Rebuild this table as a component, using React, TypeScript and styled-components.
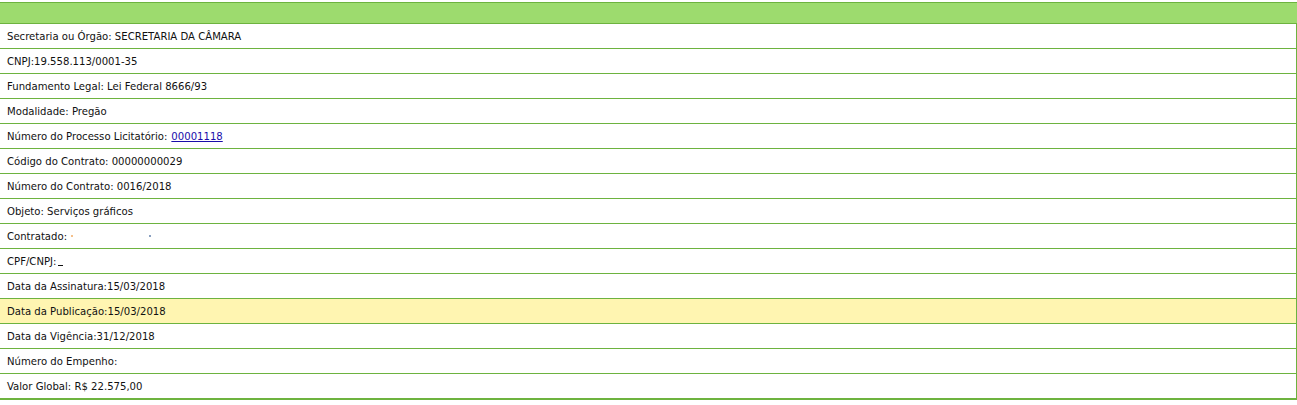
import styled, { createGlobalStyle } from "styled-components";

const GlobalStyle = createGlobalStyle`
  html, body {
    margin: 0;
    padding: 0;
    background: #ffffff;
  }
`;

const Wrapper = styled.div`
  padding-top: 2px;
  width: 1297px;
`;

const Sheet = styled.div`
  width: 1296px;
  border-right: 1px solid #6db33f;
  border-bottom: 2px solid #6db33f;
  font-family: "DejaVu Sans", Verdana, sans-serif;
  font-size: 10.1px;
  color: #111111;
`;

const Header = styled.div`
  height: 20px;
  background-color: #9ddb6e;
  border-top: 1px solid #6db33f;
  border-bottom: 1px solid #6db33f;
  margin-right: -1px;
`;

const Row = styled.div<{ $highlight?: boolean; $last?: boolean }>`
  height: 24px;
  display: flex;
  align-items: center;
  padding-left: 7px;
  background-color: ${(p) => (p.$highlight ? "#fff5b1" : "#ffffff")};
  border-bottom: ${(p) => (p.$last ? "none" : "1px solid #6db33f")};
  white-space: pre;
`;

const Link = styled.a`
  color: #1a0dab;
  text-decoration: underline;
  margin-left: 4px;
`;

const Blot = styled.span<{ $color: string; $left: number }>`
  display: inline-block;
  width: 2px;
  height: 2px;
  background: ${(p) => p.$color};
  margin-left: ${(p) => p.$left}px;
  align-self: center;
`;

const Underscore = styled.span`
  display: inline-block;
  width: 5px;
  height: 1px;
  background: #111;
  margin-left: 2px;
  margin-top: 8px;
`;

const rows: { label: string }[] = [
  { label: "Secretaria ou Órgão: SECRETARIA DA CÂMARA" },
  { label: "CNPJ:19.558.113/0001-35" },
  { label: "Fundamento Legal: Lei Federal 8666/93" },
  { label: "Modalidade: Pregão" },
];

const rowsAfter: { label: string; highlight?: boolean }[] = [
  { label: "Data da Assinatura:15/03/2018" },
  { label: "Data da Publicação:15/03/2018", highlight: true },
  { label: "Data da Vigência:31/12/2018" },
  { label: "Número do Empenho:" },
];

export default function App() {
  return (
    <Wrapper>
      <GlobalStyle />
      <Sheet>
        <Header />
        {rows.map((r) => (
          <Row key={r.label}>{r.label}</Row>
        ))}
        <Row>
          Número do Processo Licitatório:<Link href="#">00001118</Link>
        </Row>
        <Row>Código do Contrato: 00000000029</Row>
        <Row>Número do Contrato: 0016/2018</Row>
        <Row>Objeto: Serviços gráficos</Row>
        <Row>
          Contratado:
          <Blot $color="#f5c08a" $left={4} />
          <Blot $color="#8aa0c0" $left={76} />
        </Row>
        <Row>
          CPF/CNPJ:<Underscore />
        </Row>
        {rowsAfter.map((r) => (
          <Row key={r.label} $highlight={r.highlight}>
            {r.label}
          </Row>
        ))}
        <Row $last>Valor Global: R$ 22.575,00</Row>
      </Sheet>
    </Wrapper>
  );
}
